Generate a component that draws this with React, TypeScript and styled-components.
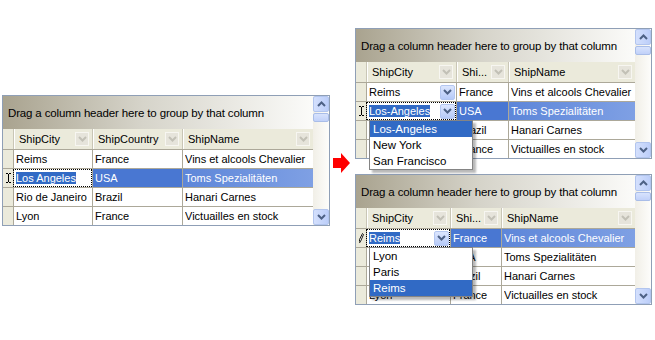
import styled, { createGlobalStyle } from "styled-components";

const GlobalStyle = createGlobalStyle`
  body {
    margin: 0;
    background: #fff;
    font-family: "Liberation Sans", Arial, sans-serif;
    font-size: 11px;
    color: #000;
  }
`;

const Page = styled.div`
  display: flex;
  align-items: flex-start;
  width: 655px;
  height: 340px;
  overflow: hidden;
`;

const LeftSide = styled.div`
  padding: 95px 0 0 2px;
`;

const ArrowSlot = styled.div`
  padding: 153px 0 0 3px;
  width: 17px;
`;

const RightSide = styled.div`
  display: flex;
  flex-direction: column;
  gap: 15px;
  padding: 28px 0 0 5px;
`;

const Frame = styled.div<{ $w: number }>`
  position: relative;
  display: flex;
  width: ${(p) => p.$w}px;
  height: 131px;
  box-sizing: border-box;
  border: 1px solid #8f9fb6;
  background: #fff;
`;

const Body = styled.div`
  flex: 1;
  display: flex;
  flex-direction: column;
`;

const GroupPanel = styled.div`
  height: 33px;
  display: flex;
  align-items: center;
  padding-left: 5px;
  font-size: 11.5px;
  letter-spacing: -0.15px;
  background: linear-gradient(to right, #a9a38f 0%, #d6d4ca 45%, #fbfbf9 100%);
`;

const HeaderRow = styled.div`
  display: flex;
  height: 20px;
  background: #ebeadb;
`;

const HeadIndicator = styled.div`
  width: 10px;
`;

const HeaderCell = styled.div<{ $w: number }>`
  width: ${(p) => p.$w}px;
  box-sizing: border-box;
  display: flex;
  align-items: center;
  justify-content: space-between;
  padding: 0 3px 0 5px;
  border-left: 1px solid #c9c6b6;
  box-shadow: inset 1px 0 #fff;
  white-space: nowrap;
`;

const HeadBtn = styled.div`
  width: 14px;
  height: 14px;
  box-sizing: border-box;
  border: 1px solid #f7f6f1;
  background: #e6e4db;
  display: flex;
  align-items: center;
  justify-content: center;
`;

const Row = styled.div`
  display: flex;
  height: 19px;
  box-sizing: border-box;
  border-top: 1px solid #aca899;
`;

const Indicator = styled.div`
  width: 10px;
  background: #ebeadb;
  display: flex;
  align-items: center;
  justify-content: center;
`;

const Cell = styled.div<{ $w: number; $tone: "plain" | "dark" | "light" }>`
  position: relative;
  width: ${(p) => p.$w}px;
  box-sizing: border-box;
  display: flex;
  align-items: center;
  padding-left: 2px;
  border-left: 1px solid #aca899;
  white-space: nowrap;
  color: ${(p) => (p.$tone === "plain" ? "#000" : "#fff")};
  background: ${(p) =>
    p.$tone === "dark"
      ? "#4977d2"
      : p.$tone === "light"
      ? "linear-gradient(to right, #5d86d9, #7fa0e4)"
      : "#fff"};
`;

const EditCell = styled(Cell)`
  outline: 1px dotted #000;
  outline-offset: -1px;
`;

const CellText = styled.span`
  overflow: hidden;
  flex: 1;
`;

const Selection = styled.span`
  background: #316ac5;
  color: #fff;
`;

const ComboBtn = styled.div`
  width: 15px;
  height: 15px;
  margin-right: 1px;
  box-sizing: border-box;
  border: 1px solid #b4c7f1;
  border-radius: 2px;
  background: linear-gradient(#dce6fe, #b6caf8);
  display: flex;
  align-items: center;
  justify-content: center;
  flex-shrink: 0;
`;

const DropList = styled.div`
  position: absolute;
  left: 2px;
  top: 100%;
  z-index: 5;
  width: 104px;
  box-sizing: border-box;
  border: 1px solid #848484;
  background: #fff;
  color: #000;
  box-shadow: 3px 3px 2px rgba(0, 0, 0, 0.28);
`;

const DropItem = styled.div<{ $sel: boolean }>`
  height: 16px;
  display: flex;
  align-items: center;
  padding-left: 3px;
  font-size: 11.5px;
  background: ${(p) => (p.$sel ? "#316ac5" : "#fff")};
  color: ${(p) => (p.$sel ? "#fff" : "#000")};
`;

const ScrollBar = styled.div`
  width: 16px;
  display: flex;
  flex-direction: column;
  background: linear-gradient(to right, #f1efe7, #fdfdfb);
`;

const ScrollBtn = styled.div`
  height: 16px;
  box-sizing: border-box;
  border: 1px solid #b2c5ee;
  border-radius: 2px;
  background: linear-gradient(to right, #d4e0fd, #bccef9);
  display: flex;
  align-items: center;
  justify-content: center;
`;

const Thumb = styled.div`
  height: 9px;
  margin-top: 1px;
  box-sizing: border-box;
  border: 1px solid #a9bde8;
  border-radius: 2px;
  background: linear-gradient(#d8e3fd, #c1d1f9);
`;

const Track = styled.div`
  flex: 1;
`;

const Chevron = ({ color, up }: { color: string; up?: boolean }) => (
  <svg width="9" height="6" viewBox="0 0 9 6">
    <polyline
      points={up ? "1,5 4.5,1.5 8,5" : "1,1 4.5,4.5 8,1"}
      fill="none"
      stroke={color}
      strokeWidth="2"
    />
  </svg>
);

const IBeam = () => (
  <svg width="5" height="10" viewBox="0 0 5 10">
    <path d="M0 0.5h2M3 0.5h2M2.5 1v8M0 9.5h2M3 9.5h2" stroke="#000" strokeWidth="1" fill="none" />
  </svg>
);

const Pencil = () => (
  <svg width="5" height="10" viewBox="0 0 5 10">
    <path d="M3.5 0.5l1 1-3 7-1-0.5 0-1.5z" fill="#fff" stroke="#000" strokeWidth="0.9" />
    <path d="M0.5 8.5l0 1 1-0.5" stroke="#000" strokeWidth="0.9" fill="none" />
  </svg>
);

type Col = { title: string; w: number };

interface GridProps {
  width: number;
  cols: Col[];
  rows: string[][];
  editRow: number;
  editText: string;
  marker: "ibeam" | "pencil";
  combos?: number[];
  drop?: { items: string[]; sel: number };
}

const Grid = ({ width, cols, rows, editRow, editText, marker, combos = [], drop }: GridProps) => (
  <Frame $w={width}>
    <Body>
      <GroupPanel>Drag a column header here to group by that column</GroupPanel>
      <HeaderRow>
        <HeadIndicator />
        {cols.map((c) => (
          <HeaderCell key={c.title} $w={c.w}>
            {c.title}
            <HeadBtn>
              <Chevron color="#c2c0b6" />
            </HeadBtn>
          </HeaderCell>
        ))}
      </HeaderRow>
      {rows.map((r, i) => {
        const editing = i === editRow;
        return (
          <Row key={i}>
            <Indicator>{editing && (marker === "ibeam" ? <IBeam /> : <Pencil />)}</Indicator>
            {editing ? (
              <EditCell $w={cols[0].w} $tone="plain">
                <CellText>
                  <Selection>{editText}</Selection>
                </CellText>
                {combos.includes(i) && (
                  <ComboBtn>
                    <Chevron color="#4d6185" />
                  </ComboBtn>
                )}
                {drop && (
                  <DropList>
                    {drop.items.map((it, k) => (
                      <DropItem key={it} $sel={k === drop.sel}>
                        {it}
                      </DropItem>
                    ))}
                  </DropList>
                )}
              </EditCell>
            ) : (
              <Cell $w={cols[0].w} $tone="plain">
                <CellText>{r[0]}</CellText>
                {combos.includes(i) && (
                  <ComboBtn>
                    <Chevron color="#4d6185" />
                  </ComboBtn>
                )}
              </Cell>
            )}
            <Cell $w={cols[1].w} $tone={editing ? "dark" : "plain"}>
              <CellText>{r[1]}</CellText>
            </Cell>
            <Cell $w={cols[2].w} $tone={editing ? "light" : "plain"}>
              <CellText>{r[2]}</CellText>
            </Cell>
          </Row>
        );
      })}
    </Body>
    <ScrollBar>
      <ScrollBtn>
        <Chevron color="#4d6185" up />
      </ScrollBtn>
      <Thumb />
      <Track />
      <ScrollBtn>
        <Chevron color="#4d6185" />
      </ScrollBtn>
    </ScrollBar>
  </Frame>
);

const orders = [
  ["Reims", "France", "Vins et alcools Chevalier"],
  ["Los Angeles", "USA", "Toms Spezialitäten"],
  ["Rio de Janeiro", "Brazil", "Hanari Carnes"],
  ["Lyon", "France", "Victuailles en stock"],
];

const RedArrow = () => (
  <svg width="17" height="20" viewBox="0 0 17 20">
    <polygon points="0,5 8,5 8,0 17,10 8,20 8,15 0,15" fill="#f00" />
  </svg>
);

const App = () => {
  return (
    <>
      <GlobalStyle />
      <Page>
        <LeftSide>
          <Grid
            width={328}
            cols={[
              { title: "ShipCity", w: 79 },
              { title: "ShipCountry", w: 90 },
              { title: "ShipName", w: 131 },
            ]}
            rows={orders}
            editRow={1}
            editText="Los Angeles"
            marker="ibeam"
          />
        </LeftSide>
        <ArrowSlot>
          <RedArrow />
        </ArrowSlot>
        <RightSide>
          <Grid
            width={297}
            cols={[
              { title: "ShipCity", w: 90 },
              { title: "Shi...", w: 52 },
              { title: "ShipName", w: 127 },
            ]}
            rows={orders}
            editRow={1}
            editText="Los-Angeles"
            marker="ibeam"
            combos={[0, 1]}
            drop={{ items: ["Los-Angeles", "New York", "San Francisco"], sel: 0 }}
          />
          <Grid
            width={297}
            cols={[
              { title: "ShipCity", w: 84 },
              { title: "Shi...", w: 51 },
              { title: "ShipName", w: 134 },
            ]}
            rows={orders}
            editRow={0}
            editText="Reims"
            marker="pencil"
            combos={[0]}
            drop={{ items: ["Lyon", "Paris", "Reims"], sel: 2 }}
          />
        </RightSide>
      </Page>
    </>
  );
};

export default App;
